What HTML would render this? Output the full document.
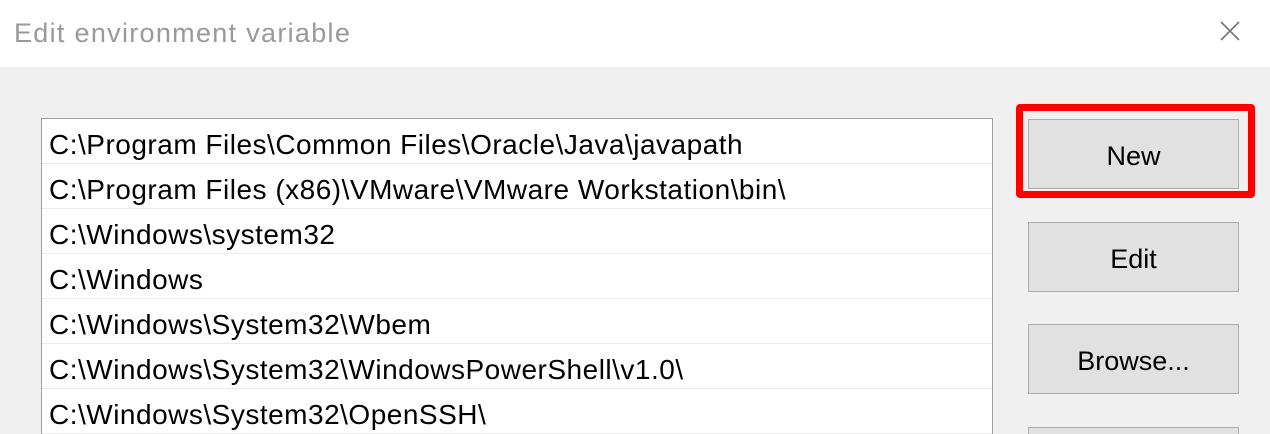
<!DOCTYPE html>
<html><head><style>
html,body{margin:0;width:1270px;height:434px;overflow:hidden}
body{background:#f0f0f0;font-family:"Liberation Sans",sans-serif;position:relative}
.title{position:absolute;left:0;top:0;width:1270px;height:67px;background:#fff}
.title span{position:absolute;left:14px;top:18px;font-size:27px;letter-spacing:1.3px;color:#999}
.list{position:absolute;left:41px;top:118px;width:950px;height:316px;background:#fff;border:1px solid #a0a0a0;border-bottom:none;overflow:hidden}
.row{height:44px;border-bottom:1px solid #ececec;font-size:28px;color:#000;line-height:52px;padding-left:7px;white-space:nowrap;letter-spacing:0.5px;overflow:hidden}
.btn{position:absolute;left:1028px;width:209px;height:68px;background:#e1e1e1;border:1px solid #adadad;font-size:27px;text-align:center;line-height:72px;color:#000}
.red{position:absolute;left:1016px;top:104px;width:225px;height:80px;border:7px solid #f00;border-radius:4px}
</style></head><body>
<div class="title"><span>Edit environment variable</span>
<svg style="position:absolute;left:1220px;top:21px" width="20" height="20"><path d="M1 1L19 19M19 1L1 19" stroke="#777" stroke-width="1.6"/></svg></div>
<div class="list">
<div class="row">C:\Program Files\Common Files\Oracle\Java\javapath</div>
<div class="row">C:\Program Files (x86)\VMware\VMware Workstation\bin\</div>
<div class="row">C:\Windows\system32</div>
<div class="row">C:\Windows</div>
<div class="row">C:\Windows\System32\Wbem</div>
<div class="row">C:\Windows\System32\WindowsPowerShell\v1.0\</div>
<div class="row">C:\Windows\System32\OpenSSH\</div>
</div>
<div class="btn" style="top:119px">New</div>
<div class="btn" style="top:222px">Edit</div>
<div class="btn" style="top:324px">Browse...</div>
<div class="btn" style="top:427px;height:6px;border-bottom:none"></div>
<div class="red"></div>
</body></html>
